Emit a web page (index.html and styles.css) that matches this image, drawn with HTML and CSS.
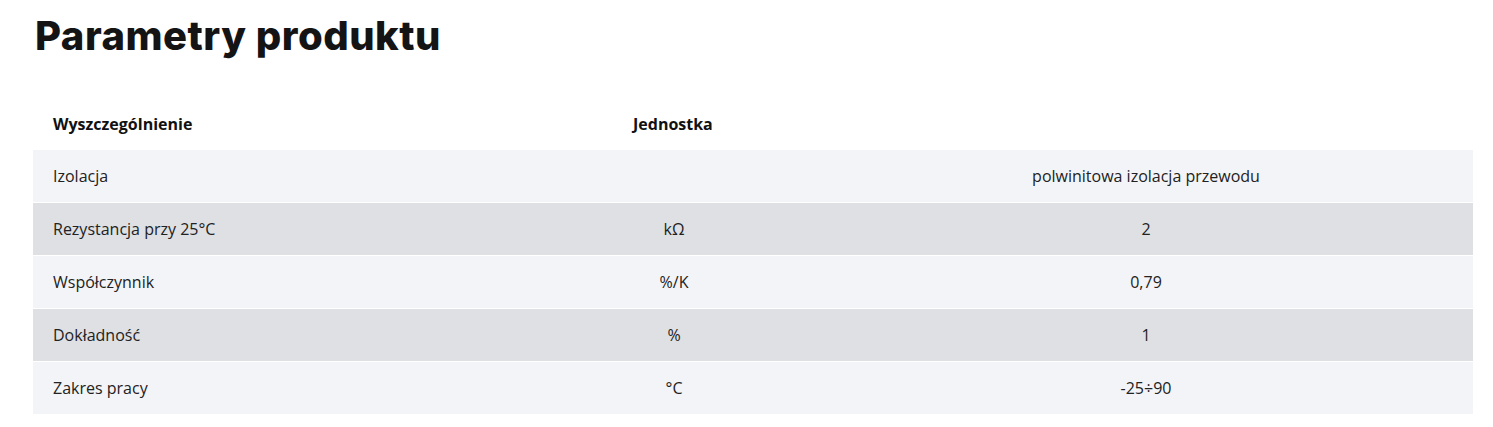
FILE: index.html
```html
<!DOCTYPE html>
<html lang="pl">
<head>
<meta charset="utf-8">
<title>Parametry produktu</title>
<link rel="stylesheet" href="styles.css">
</head>
<body>
<main class="page">
  <h2 class="title">Parametry produktu</h2>
  <table class="params">
    <colgroup>
      <col class="w1">
      <col class="w2">
      <col>
    </colgroup>
    <thead>
      <tr>
        <th class="c1">Wyszczególnienie</th>
        <th class="c2">Jednostka</th>
        <th class="c3"></th>
      </tr>
    </thead>
    <tbody>
      <tr class="light"><td class="c1">Izolacja</td><td class="c2"></td><td class="c3">polwinitowa izolacja przewodu</td></tr>
      <tr class="dark"><td class="c1">Rezystancja przy 25°C</td><td class="c2">kΩ</td><td class="c3">2</td></tr>
      <tr class="light"><td class="c1">Współczynnik</td><td class="c2">%/K</td><td class="c3">0,79</td></tr>
      <tr class="dark"><td class="c1">Dokładność</td><td class="c2">%</td><td class="c3">1</td></tr>
      <tr class="light"><td class="c1">Zakres pracy</td><td class="c2">°C</td><td class="c3">-25÷90</td></tr>
    </tbody>
  </table>
</main>
</body>
</html>
```
FILE: styles.css
```css
html, body {
  margin: 0;
  padding: 0;
  background: #ffffff;
}
body {
  font-family: "Open Sans", "Liberation Sans", sans-serif;
  color: #222222;
}
.page {
  padding: 0 20px 0 33px;
}
.title {
  margin: 0;
  padding-top: 12px;
  padding-left: 2px;
  font-family: "Inter", "Liberation Sans", sans-serif;
  font-weight: 800;
  font-size: 40px;
  line-height: 48px;
  color: #141414;
  letter-spacing: 0.5px;
}
.params {
  margin-top: 37px;
  width: 1440px;
  border-collapse: separate;
  border-spacing: 0 1px;
  table-layout: fixed;
  font-size: 16px;
}
.w1 { width: 580px; }
.w2 { width: 122px; }
.params th {
  font-weight: 700;
  text-align: left;
  height: 51px;
  padding: 0 0 0 20px;
  color: #111111;
  vertical-align: middle;
}
.params td {
  height: 52px;
  padding: 0;
  vertical-align: middle;
}
.params td.c1 { padding-left: 20px; text-align: left; }
.params td.c2 { text-align: center; }
.params td.c3 { padding-left: 104px; padding-right: 20px; text-align: center; }
.light td { background: #f3f4f7; }
.dark td { background: #dee0e4; }
```
